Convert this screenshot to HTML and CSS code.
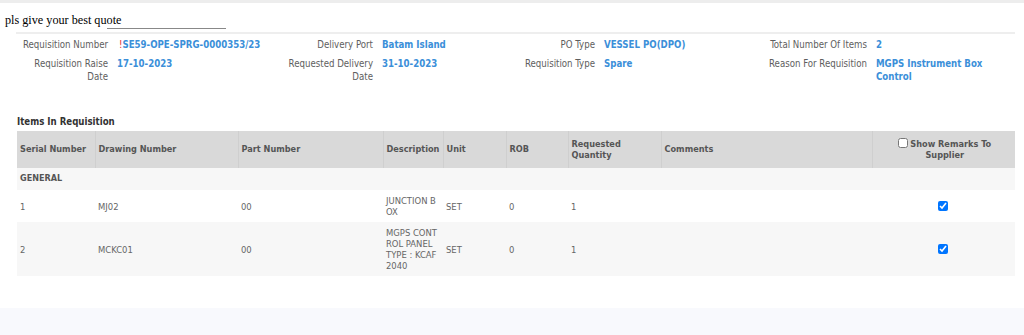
FILE: index.html
```html
<!DOCTYPE html>
<html>
<head>
<meta charset="utf-8">
<link rel="stylesheet" href="styles.css">
</head>
<body>
<div class="card">
  <div class="note"><span class="note-text">pls give your best quote</span><span class="note-line"></span></div>
  <div class="rule"></div>
  <div class="info">
    <div class="lbl">Requisition Number</div>
    <div class="val"><span class="bang">!</span>SE59-OPE-SPRG-0000353/23</div>
    <div class="lbl">Delivery Port</div>
    <div class="val">Batam Island</div>
    <div class="lbl">PO Type</div>
    <div class="val">VESSEL PO(DPO)</div>
    <div class="lbl">Total Number Of Items</div>
    <div class="val">2</div>

    <div class="lbl">Requisition Raise Date</div>
    <div class="val">17-10-2023</div>
    <div class="lbl">Requested Delivery Date</div>
    <div class="val">31-10-2023</div>
    <div class="lbl">Requisition Type</div>
    <div class="val">Spare</div>
    <div class="lbl">Reason For Requisition</div>
    <div class="val">MGPS Instrument Box Control</div>
  </div>

  <div class="section-title">Items In Requisition</div>
  <table class="items">
    <colgroup>
      <col class="c-serial"><col class="c-drawing"><col class="c-part"><col class="c-desc"><col class="c-unit"><col class="c-rob"><col class="c-qty"><col class="c-comments"><col class="c-remarks">
    </colgroup>
    <thead>
      <tr>
        <th>Serial Number</th>
        <th>Drawing Number</th>
        <th>Part Number</th>
        <th>Description</th>
        <th>Unit</th>
        <th>ROB</th>
        <th>Requested Quantity</th>
        <th>Comments</th>
        <th class="center remarks"><input type="checkbox" class="cb">Show Remarks To Supplier</th>
      </tr>
    </thead>
    <tbody>
      <tr class="group"><td colspan="9">GENERAL</td></tr>
      <tr>
        <td>1</td><td>MJ02</td><td>00</td><td class="desc">JUNCTION BOX</td><td>SET</td><td>0</td><td>1</td><td></td>
        <td class="center"><input type="checkbox" class="cb" checked></td>
      </tr>
      <tr class="alt">
        <td>2</td><td>MCKC01</td><td>00</td><td class="desc">MGPS CONTROL PANEL TYPE : KCAF 2040</td><td>SET</td><td>0</td><td>1</td><td></td>
        <td class="center"><input type="checkbox" class="cb" checked></td>
      </tr>
    </tbody>
  </table>
</div>
</body>
</html>
```

FILE: styles.css
```css
html, body {
  margin: 0;
  padding: 0;
}
body {
  background: #f8f9fd;
  font-family: "DejaVu Sans Condensed", "DejaVu Sans", sans-serif;
  font-stretch: condensed;
}
.card {
  background: #fff;
  height: 308px;
  box-sizing: border-box;
  border-top: 3px solid #ededed;
  box-shadow: 0 1px 3px rgba(0, 0, 0, 0.12);
  padding: 0 9px 0 17px;
}
.note {
  display: flex;
  align-items: flex-end;
  margin-left: -12px;
  height: 25px;
}
.note-text {
  font-family: "Liberation Serif", serif;
  font-stretch: normal;
  font-size: 12.2px;
  color: #000;
  line-height: 15px;
}
.note-line {
  display: block;
  width: 119px;
  height: 0;
  border-bottom: 1px solid #888;
  margin-left: -14px;
  margin-bottom: -1px;
}
.rule {
  height: 2px;
  background: #eeeeee;
  margin-top: 4px;
  margin-left: -1px;
}
.info {
  display: grid;
  grid-template-columns: 91px 174px 91px 137px 85px 163px 109px 123px;
  row-gap: 6px;
  margin-top: 4px;
  font-size: 9.6px;
  line-height: 13px;
}
.lbl {
  text-align: right;
  color: #5e5e5e;
}
.val {
  padding-left: 9px;
  color: #3b8fd9;
  font-weight: bold;
}
.bang {
  color: #e8262b;
  font-weight: normal;
  margin-left: 2px;
}
.section-title {
  margin-top: 32px;
  font-size: 9.6px;
  font-weight: bold;
  color: #333;
  line-height: 13px;
}
.items {
  margin-top: 3px;
  border-collapse: collapse;
  table-layout: fixed;
  width: 998px;
  font-size: 9.4px;
  color: #666;
}
.c-serial { width: 78px; }
.c-drawing { width: 143px; }
.c-part { width: 145px; }
.c-desc { width: 60px; }
.c-unit { width: 63px; }
.c-rob { width: 62px; }
.c-qty { width: 93px; }
.c-comments { width: 211px; }
.c-remarks { width: 143px; }
.items th {
  background: #d9d9d9;
  color: #555;
  font-weight: bold;
  font-size: 9.1px;
  text-align: left;
  padding: 7px 3px 7px 3px;
  line-height: 11px;
  border-right: 1px solid #cfcfcf;
  vertical-align: middle;
}
.items th:last-child { border-right: none; }
.items th.remarks {
  padding-left: 22px;
  padding-right: 20px;
}
.items td {
  padding: 5px 3px;
  line-height: 11px;
  vertical-align: middle;
}
.items .desc {
  word-break: break-all;
  padding-right: 4px;
}
.items .group td {
  background: #f7f7f7;
  font-weight: bold;
  font-size: 9px;
  color: #555;
  padding: 5px 3px 6px;
}
.items .alt td {
  background: #f7f7f7;
}
.center {
  text-align: center !important;
}
.cb {
  width: 10px;
  height: 10px;
  margin: 0 2px 0 0;
  vertical-align: -1px;
}
```
